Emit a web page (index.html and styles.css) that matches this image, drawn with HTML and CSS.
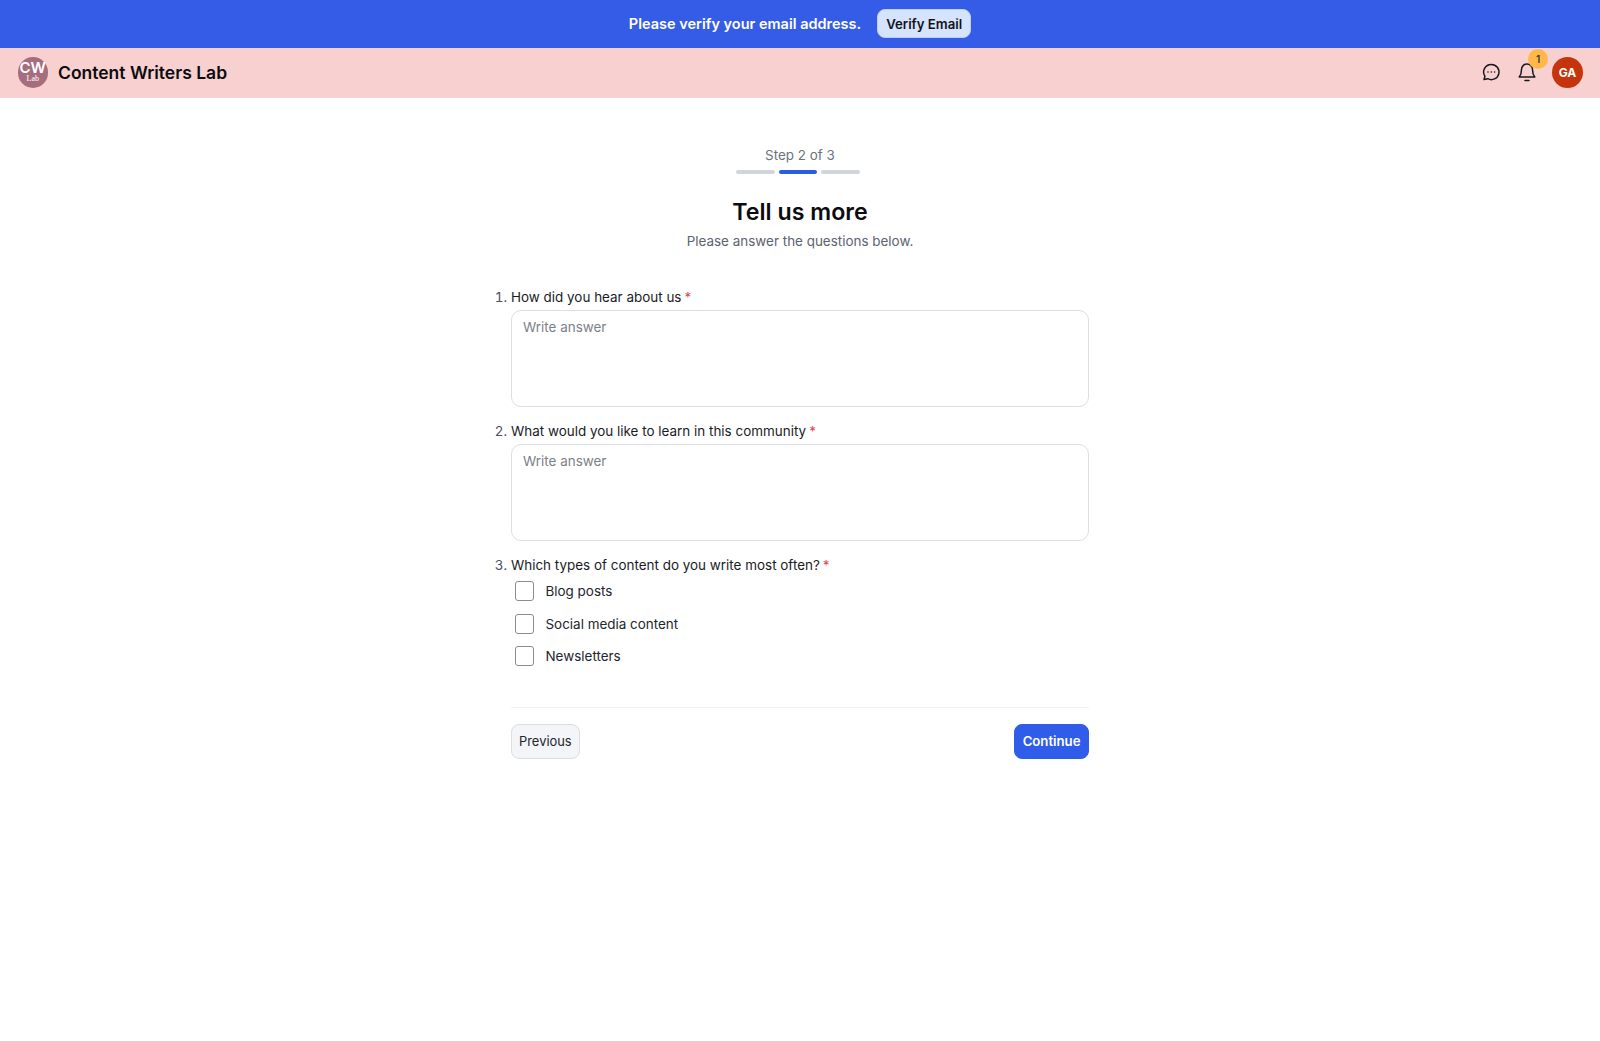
FILE: index.html
```html
<!DOCTYPE html>
<html lang="en">
<head>
<meta charset="utf-8">
<title>Content Writers Lab</title>
<link rel="stylesheet" href="styles.css">
</head>
<body>
<div class="banner">
  <span class="banner-text">Please verify your email address.</span>
  <button class="verify-btn" type="button">Verify Email</button>
</div>
<header class="topbar">
  <div class="brand">
    <div class="logo"><span class="logo-cw">CW</span><span class="logo-lab">Lab</span></div>
    <span class="brand-name">Content Writers Lab</span>
  </div>
  <div class="actions">
    <svg class="icon" width="20" height="20" viewBox="0 0 20 20" fill="none" stroke="#16181d" stroke-width="1.5" stroke-linecap="round" stroke-linejoin="round">
      <path d="M10.3 2.4a7.6 7.6 0 1 1-3.5 14.3l-3.8.9.9-3.4A7.6 7.6 0 0 1 10.3 2.4Z"/>
      <path d="M7 10h.01M10.3 10h.01M13.6 10h.01" stroke-width="1.6"/>
    </svg>
    <div class="bell-wrap">
      <svg class="icon" width="20" height="22" viewBox="0 0 20 22" fill="none" stroke="#16181d" stroke-width="1.5" stroke-linecap="round" stroke-linejoin="round">
        <path d="M4.500 8.500a5.500 5.500 0 0 1 11 0c0 4 1 6 2.300 7.500H2.200c1.300-1.500 2.300-3.500 2.300-7.500Z"/>
        <path d="M8 19.500h4"/>
      </svg>
      <span class="badge">1</span>
    </div>
    <div class="avatar">GA</div>
  </div>
</header>
<main class="page">
  <div class="step-label">Step 2 of 3</div>
  <div class="steps"><span class="step"></span><span class="step step-active"></span><span class="step"></span></div>
  <h1 class="title">Tell us more</h1>
  <p class="subtitle">Please answer the questions below.</p>
  <form class="form">
    <div class="question">
      <div class="label"><span class="num">1.</span>How did you hear about us<span class="req">*</span></div>
      <textarea class="answer" placeholder="Write answer"></textarea>
    </div>
    <div class="question">
      <div class="label"><span class="num">2.</span>What would you like to learn in this community<span class="req">*</span></div>
      <textarea class="answer" placeholder="Write answer"></textarea>
    </div>
    <div class="question">
      <div class="label"><span class="num">3.</span>Which types of content do you write most often?<span class="req">*</span></div>
      <div class="options">
        <label class="option"><span class="box"></span>Blog posts</label>
        <label class="option"><span class="box"></span>Social media content</label>
        <label class="option"><span class="box"></span>Newsletters</label>
      </div>
    </div>
    <div class="footer">
      <button class="btn btn-prev" type="button">Previous</button>
      <button class="btn btn-next" type="button">Continue</button>
    </div>
  </form>
</main>
</body>
</html>
```
FILE: styles.css
```css
* { box-sizing: border-box; }
html, body { margin: 0; padding: 0; }
body {
  font-family: Inter, "Liberation Sans", sans-serif;
  background: #fff;
  color: #191b1f;
  min-height: 1041px;
}
.banner {
  height: 47.500px;
  background: #355ce6;
  display: flex;
  align-items: center;
  justify-content: center;
  gap: 16px;
}
.banner-text { color: #fff; font-size: 14.500px; font-weight: 600; }
.verify-btn {
  height: 29px;
  padding: 0 8px;
  border: 1px solid #bcd0fb;
  border-radius: 8px;
  background: #d5e3fd;
  color: #111318;
  font: 600 13.200px Inter, sans-serif;
}
.topbar {
  height: 50.500px;
  background: #f8d0d0;
  display: flex;
  align-items: center;
  justify-content: space-between;
  padding: 0 17px 1px 17.500px;
}
.brand { display: flex; align-items: center; gap: 10px; }
.logo {
  width: 30.500px;
  height: 30.500px;
  border-radius: 50%;
  background: #a76d7f;
  color: #fff;
  display: flex;
  flex-direction: column;
  align-items: center;
  justify-content: center;
}
.logo-cw { font-size: 15px; font-weight: 600; line-height: 14px; }
.logo-lab { font: 8px/8px "Liberation Serif", serif; }
.brand-name { font-size: 17.500px; font-weight: 600; color: #0b0c0f; }
.actions { display: flex; align-items: center; }
.icon { display: block; }
.bell-wrap { position: relative; margin-left: 16px; }
.badge {
  position: absolute;
  top: -12px;
  left: 11px;
  width: 20px;
  height: 20px;
  border-radius: 50%;
  background: #fdb849;
  color: #3a3a2c;
  font-size: 10px;
  font-weight: 600;
  display: flex;
  align-items: center;
  justify-content: center;
}
.avatar {
  width: 31px;
  height: 31px;
  margin-left: 15px;
  border-radius: 50%;
  background: #c5340c;
  color: #fff;
  font-size: 12px;
  font-weight: 700;
  display: flex;
  align-items: center;
  justify-content: center;
}
.page {
  width: 578px;
  margin: 0 auto;
  padding-top: 47px;
  display: flex;
  flex-direction: column;
  align-items: center;
}
.step-label { font-size: 13.440px; line-height: 20px; color: #6b7280; }
.steps { display: flex; gap: 4px; margin: 5px 4px 0 0; }
.step { width: 38.700px; height: 4px; border-radius: 2px; background: #d1d5db; }
.step-active { background: #2a5be0; }
.title { margin: 22px 0 0; font-size: 23.200px; line-height: 32px; font-weight: 600; color: #0b0c0f; }
.subtitle { margin: 3px 0 0; font-size: 13.440px; line-height: 20px; color: #5c6270; }
.form { width: 100%; margin-top: 36px; }
.question { margin-bottom: 14px; }
.label { position: relative; font-size: 13.440px; line-height: 20px; color: #191b1f; margin-bottom: 3px; }
.num { position: absolute; right: 100%; margin-right: 4px; color: #4b5160; font-variant-numeric: tabular-nums; }
.req { color: #e04848; margin-left: 3px; }
.answer {
  display: block;
  width: 100%;
  height: 97px;
  padding: 6px 11px;
  border: 1px solid #dcdee6;
  border-radius: 10px;
  font: 13.440px/20px Inter, sans-serif;
  resize: none;
  outline: none;
}
.answer::placeholder { color: #7b7f88; opacity: 1; }
.options { display: flex; flex-direction: column; gap: 12.500px; margin-left: 4px; padding-top: 3px; }
.option { display: flex; align-items: center; gap: 11.500px; height: 20px; font-size: 13.440px; color: #22252b; }
.box { width: 19px; height: 20px; border: 1px solid #8a8d94; border-radius: 3px; background: #fff; }
.footer {
  margin-top: 41px;
  padding-top: 16px;
  border-top: 1px solid #f1f2f4;
  display: flex;
  justify-content: space-between;
}
.btn {
  height: 35px;
  padding: 0 7px;
  border-radius: 8px;
  font: 12.900px Inter, sans-serif;
}
.btn-prev { background: #f4f5f8; border: 1px solid #dcdee3; color: #23262d; }
.btn-next { padding: 0 7.500px 1px; background: #2f5ce8; border: 1px solid #2f5ce8; color: #fff; font-weight: 600; font-size: 13.200px; }
```
